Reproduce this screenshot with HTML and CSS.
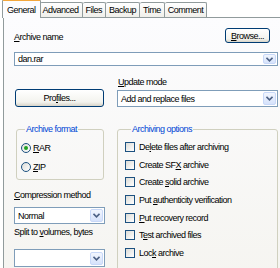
FILE: index.html
```html
<!DOCTYPE html>
<html lang="en">
<head>
  <meta charset="UTF-8">
  <title>Archive name and parameters</title>
  <link rel="stylesheet" href="styles.css">
</head>
<body>
  <div class="tabs">
    <span class="tab active">General</span>
    <span class="tab">Advanced</span>
    <span class="tab">Files</span>
    <span class="tab">Backup</span>
    <span class="tab">Time</span>
    <span class="tab">Comment</span>
  </div>

  <div class="page">
    <div class="name-row">
      <span class="label"><u>A</u>rchive name</span>
      <button type="button" class="btn browse"><u>B</u>rowse...</button>
    </div>
    <div class="combo name-combo">
      <span class="value">dan.rar</span>
      <span class="drop"><svg width="7" height="5" viewBox="0 0 7 5"><path d="M0.5 0.8 L3.5 3.8 L6.5 0.8" fill="none" stroke="#4d6185" stroke-width="1.6"/></svg></span>
    </div>

    <div class="cols">
      <div class="col-left">
        <button type="button" class="btn profiles">Pro<u>f</u>iles...</button>
      </div>
      <div class="col-right">
        <div class="label"><u>U</u>pdate mode</div>
        <div class="combo update-combo">
          <span class="value">Add and replace files</span>
          <span class="drop"><svg width="7" height="5" viewBox="0 0 7 5"><path d="M0.5 0.8 L3.5 3.8 L6.5 0.8" fill="none" stroke="#4d6185" stroke-width="1.6"/></svg></span>
        </div>
      </div>
    </div>

    <div class="cols groups">
      <div class="col-left">
        <fieldset class="format">
          <legend>Archive format</legend>
          <div class="opt"><span class="radio on"></span><span><u>R</u>AR</span></div>
          <div class="opt"><span class="radio"></span><span><u>Z</u>IP</span></div>
        </fieldset>

        <div class="label method-label"><u>C</u>ompression method</div>
        <div class="combo small-combo">
          <span class="value">Normal</span>
          <span class="drop"><svg width="7" height="5" viewBox="0 0 7 5"><path d="M0.5 0.8 L3.5 3.8 L6.5 0.8" fill="none" stroke="#4d6185" stroke-width="1.6"/></svg></span>
        </div>

        <div class="label split-label">Split to <u>v</u>olumes, bytes</div>
        <div class="combo small-combo split-combo">
          <span class="value"></span>
          <span class="drop"><svg width="7" height="5" viewBox="0 0 7 5"><path d="M0.5 0.8 L3.5 3.8 L6.5 0.8" fill="none" stroke="#4d6185" stroke-width="1.6"/></svg></span>
        </div>
      </div>

      <div class="col-right">
        <fieldset class="options">
          <legend>Archiving options</legend>
          <div class="opt"><span class="check"></span><span>De<u>l</u>ete files after archiving</span></div>
          <div class="opt"><span class="check"></span><span>Create SF<u>X</u> archive</span></div>
          <div class="opt"><span class="check"></span><span>Create <u>s</u>olid archive</span></div>
          <div class="opt"><span class="check"></span><span>Put <u>a</u>uthenticity verification</span></div>
          <div class="opt"><span class="check"></span><span><u>P</u>ut recovery record</span></div>
          <div class="opt"><span class="check"></span><span>T<u>e</u>st archived files</span></div>
          <div class="opt"><span class="check"></span><span>Loc<u>k</u> archive</span></div>
        </fieldset>
      </div>
    </div>
  </div>
</body>
</html>
```

FILE: styles.css
```css
html, body {
  overflow: hidden;
}
body {
  margin: 0;
  background-color: #ffffff;
  font-family: "Liberation Sans", Arial, sans-serif;
  font-size: 9px;
  letter-spacing: -0.5px;
  color: #000;
}
u {
  text-decoration: underline;
}
.tabs {
  display: flex;
  align-items: flex-end;
  height: 17px;
  padding-left: 4px;
}
.tab {
  height: 14px;
  line-height: 14px;
  padding: 0 3px;
  border: 1px solid #919b9c;
  border-bottom: none;
  border-left: none;
  border-radius: 2px 2px 0 0;
  background: linear-gradient(#ffffff, #f0efea);
}
.tab.active {
  position: relative;
  z-index: 1;
  height: 17px;
  line-height: 18px;
  margin: 0 -1px -1px -2px;
  padding: 0 4px;
  border-left: 1px solid #919b9c;
  border-top: 2px solid #f3a73c;
  background: #fcfcfe;
}
.page {
  margin-left: 3px;
  height: 300px;
  padding: 10px 2px 0 10px;
  border-top: 1px solid #919b9c;
  border-left: 1px solid #919b9c;
  background: linear-gradient(#fcfcfe, #f4f3ee);
}
.label {
  line-height: 11px;
}
.name-row {
  display: flex;
  justify-content: space-between;
  align-items: flex-end;
}
.btn {
  font: inherit;
  letter-spacing: inherit;
  color: #000;
  padding: 0;
  border: 1px solid #003c74;
  border-radius: 3px;
  background: linear-gradient(#ffffff, #f3f3ee 75%, #d8d4c8);
}
.browse {
  width: 45px;
  height: 15px;
  margin-right: 8px;
}
.combo {
  display: flex;
  align-items: center;
  box-sizing: border-box;
  padding: 0 1px 0 3px;
  border: 1px solid #7f9db9;
  background-color: #fff;
}
.combo .drop {
  display: flex;
  align-items: center;
  justify-content: center;
  margin-left: auto;
  width: 13px;
  box-sizing: border-box;
  border: 1px solid #c8d8f8;
  border-radius: 2px;
  background: linear-gradient(#f2f6fe, #d6e2fb);
}
.name-combo {
  height: 14px;
  margin-top: 9px;
}
.name-combo .drop {
  height: 10px;
}
.cols {
  display: grid;
  grid-template-columns: 91px 161px;
  column-gap: 12px;
}
.col-left {
  display: flex;
  flex-direction: column;
}
.profiles {
  margin-top: auto;
  margin-left: 1px;
  width: 89px;
  height: 18px;
}
.col-right > .label {
  margin-top: 11px;
  padding-left: 1px;
}
.update-combo {
  height: 17px;
  margin-top: 2px;
}
.update-combo .drop,
.small-combo .drop {
  height: 13px;
}
.groups {
  margin-top: 17px;
}
fieldset {
  margin: 0;
  min-width: 0;
  border: 1px solid #d0d0bf;
  border-radius: 3px;
}
legend {
  color: #0046d5;
  line-height: 11px;
  padding: 0 1px;
  margin-left: 4px;
}
.opt {
  display: flex;
  align-items: center;
  gap: 2px;
}
.format {
  margin: 0 1px 0 2px;
  padding: 3px 0 3px 4px;
}
.format .opt {
  height: 19px;
}
.options {
  padding: 3px 0 20px 7px;
}
.options legend {
  margin-left: 6px;
}
.options .opt {
  height: 17.7px;
  gap: 4px;
}
.radio {
  position: relative;
  width: 10px;
  height: 10px;
  box-sizing: border-box;
  border: 1px solid #1c5180;
  border-radius: 50%;
  background: linear-gradient(135deg, #dcdcd7, #ffffff);
}
.radio.on::after {
  content: "";
  position: absolute;
  left: 2px;
  top: 2px;
  width: 4px;
  height: 4px;
  border-radius: 50%;
  background: #21a121;
}
.check {
  width: 10px;
  height: 10px;
  box-sizing: border-box;
  border: 1px solid #1c5180;
  background: linear-gradient(135deg, #dcdcd7, #ffffff);
}
.method-label {
  margin-top: 10px;
}
.small-combo {
  height: 17px;
  margin-top: 6px;
}
.split-label {
  margin-top: 3px;
}
.split-combo {
  height: 18px;
  margin-top: 11px;
}
```
